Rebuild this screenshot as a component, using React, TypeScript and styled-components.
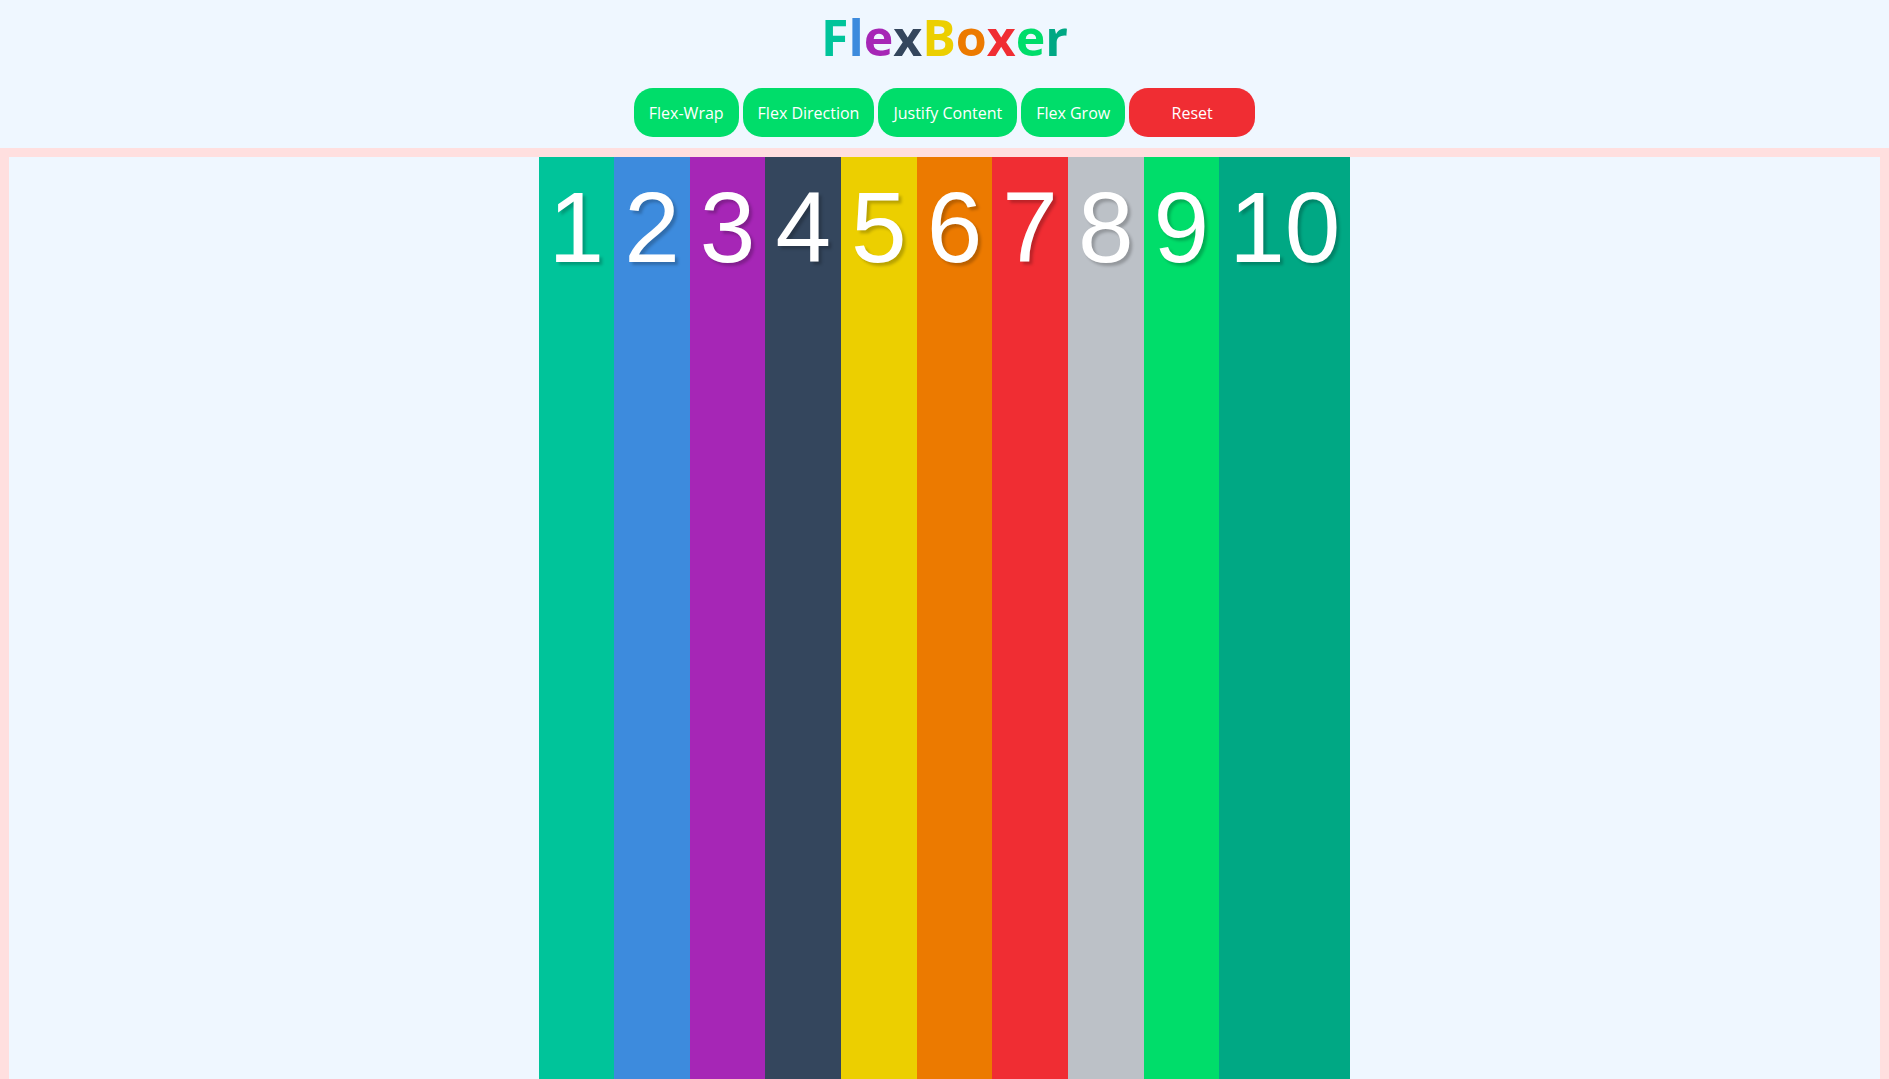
import React from "react";
import styled, { createGlobalStyle } from "styled-components";

const GlobalStyle = createGlobalStyle`
  html, body {
    margin: 0;
    padding: 0;
    background: #eff7ff;
    overflow: hidden;
  }
  * { box-sizing: border-box; }
`;

const COLORS = [
  "#00c49a",
  "#3d8bdd",
  "#a626b6",
  "#34465d",
  "#eccf00",
  "#ec7a00",
  "#f02d33",
  "#bcc1c7",
  "#00dd6a",
  "#00a884",
];

const TITLE_COLORS = [
  "#00c49a",
  "#3d8bdd",
  "#a626b6",
  "#34465d",
  "#eccf00",
  "#ec7a00",
  "#f02d33",
  "#00dd6a",
  "#00a884",
];

const Page = styled.div`
  display: flex;
  flex-direction: column;
  min-height: 100vh;
`;

const Header = styled.header`
  display: flex;
  flex-direction: column;
  align-items: center;
  height: 148px;
  padding-top: 12px;
`;

const Title = styled.h1`
  margin: 0;
  font-family: "Open Sans", "Liberation Sans", sans-serif;
  font-weight: 700;
  font-size: 50px;
  line-height: 50px;
  letter-spacing: 0;
`;

const Letter = styled.span<{ $color: string }>`
  color: ${(p) => p.$color};
`;

const Toolbar = styled.div`
  display: flex;
  gap: 4px;
  margin-top: 26px;
`;

const Button = styled.button<{ $danger?: boolean }>`
  height: 49px;
  padding: 0 15px;
  min-width: ${(p) => (p.$danger ? "126px" : "0")};
  border: none;
  border-radius: 19px;
  background: ${(p) => (p.$danger ? "#f02d33" : "#00dd6a")};
  color: #ffffff;
  font-family: "Open Sans", "Liberation Sans", sans-serif;
  font-size: 16px;
  cursor: pointer;
`;

const Board = styled.main`
  flex: 1;
  height: calc(100vh - 148px);
  border: 9px solid #ffdfdf;
  border-bottom: none;
  background: #eff7ff;
  display: flex;
  justify-content: center;
  align-items: stretch;
`;

const Item = styled.div<{ $bg: string }>`
  background: ${(p) => p.$bg};
  padding: 10px 10px;
  font-family: "Liberation Sans", Arial, sans-serif;
  font-size: 100px;
  line-height: 1.2;
  color: #ffffff;
  text-align: center;
  text-shadow: 3px 3px 3px rgba(0, 0, 0, 0.22);
`;

export default function App() {
  const title = "FlexBoxer".split("");
  return (
    <Page>
      <GlobalStyle />
      <Header>
        <Title>
          {title.map((ch, i) => (
            <Letter key={i} $color={TITLE_COLORS[i]}>
              {ch}
            </Letter>
          ))}
        </Title>
        <Toolbar>
          <Button>Flex-Wrap</Button>
          <Button>Flex Direction</Button>
          <Button>Justify Content</Button>
          <Button>Flex Grow</Button>
          <Button $danger>Reset</Button>
        </Toolbar>
      </Header>
      <Board>
        {COLORS.map((c, i) => (
          <Item key={i} $bg={c}>
            {i + 1}
          </Item>
        ))}
      </Board>
    </Page>
  );
}
